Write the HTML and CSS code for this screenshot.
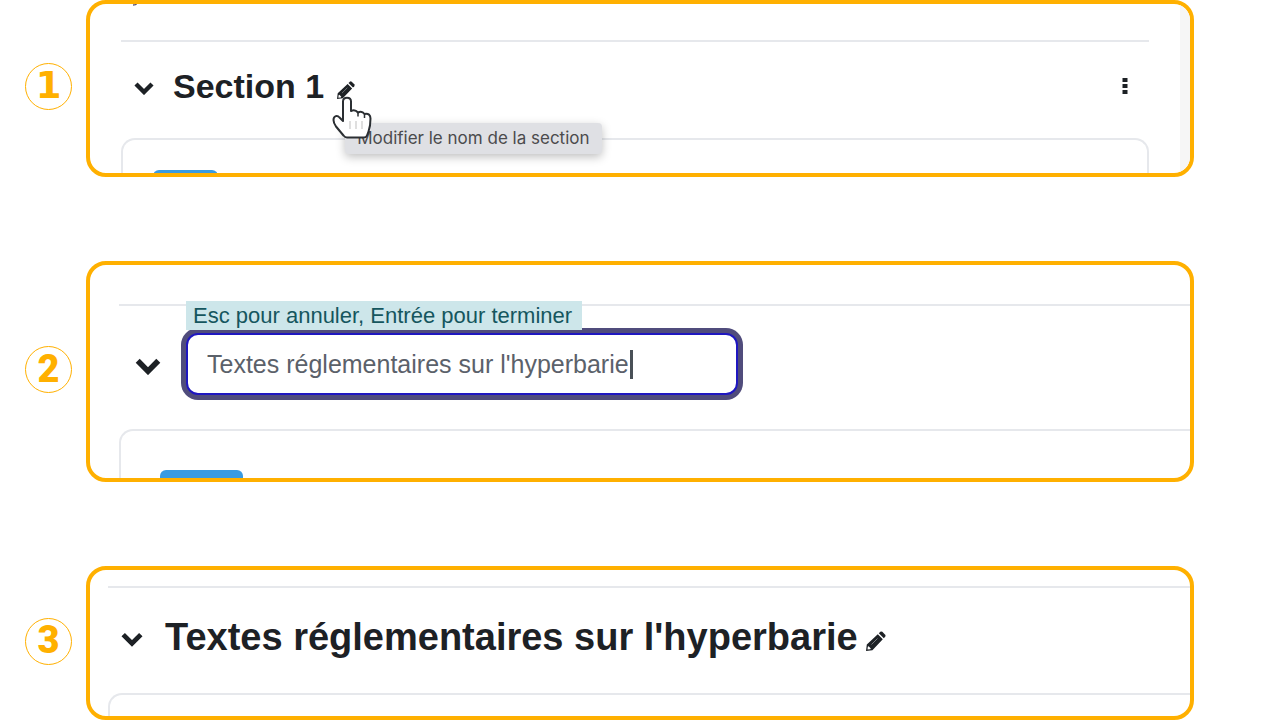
FILE: index.html
```
<!DOCTYPE html>
<html lang="fr">

<head>
  <meta charset="UTF-8" />
  <meta name="viewport" content="width=device-width, initial-scale=1.0" />
  <title>Modifier le nom de la section</title>
  <link rel="stylesheet" href="styles.css">
</head>

<body>
  <!-- shared icons -->
  <svg class="sprite" aria-hidden="true">
    <symbol id="chevron" viewBox="0 0 20 14">
      <path d="M2 3l8 8 8-8" fill="none" stroke="#1d2125" stroke-width="4.4" />
    </symbol>
    <symbol id="pencil" viewBox="0 0 20 20">
      <path fill="#1d2125" fill-rule="evenodd" d="M0 20l.8-6.400L11.800 3.200l5 5L6.400 19.200zM1.800 15.800l-.3 2.700 2.700-.3.6-.8-2.200-2.200z" />
      <path fill="#1d2125" d="M12.800 2.200L14.300.8q1-.8 2 0l2.900 2.900q.8 1 0 2l-1.400 1.500z" />
      <path d="M5.500 13.500l6-6" stroke="#8b8f93" stroke-width=".8" />
    </symbol>
  </svg>

  <main class="steps">
    <section class="step">
      <div class="badge badge-one">1</div>
      <div class="panel panel-hover">
        <svg class="cut-text" viewBox="0 0 6 3" aria-hidden="true"><path d="M1 1q3 0 3.500-1" fill="none" stroke="#5c5570" stroke-width="1.500" /></svg>
        <div class="topic">
          <div class="topic-header">
            <button class="icon-btn" aria-label="Replier"><svg class="chevron"><use href="#chevron" /></svg></button>
            <h2>Section 1</h2>
            <button class="icon-btn edit" aria-label="Modifier le nom de la section" aria-describedby="tip">
              <svg class="pencil"><use href="#pencil" /></svg>
              <span class="tooltip" id="tip" role="tooltip">Modifier le nom de la section</span>
              <svg class="hand" viewBox="0 0 40 43" aria-hidden="true">
                <path d="M11 25V5.500C11 0.500 19 0.500 19 5.500V15q4-2 7 1.500 4-2 6.500 1.500 6-1 6 4.500c0 6-.5 9-2 13l-1.500 4q-.7 2-3 2H15q-2 0-3.500-2L4 30.500Q1.500 27 1.500 24c0-4.500 4-5 6-2.500z" fill="#fff" stroke="#2b2f33" stroke-width="2" stroke-linejoin="round" />
                <path d="M26 16.500v4M32.500 18v4" stroke="#2b2f33" stroke-width="1.500" />
                <path d="M18 25v8M24 25v8M30 25v8" stroke="#d5d5d5" stroke-width="1.500" />
              </svg>
            </button>
            <button class="icon-btn menu" aria-label="Menu">
              <svg class="dots" viewBox="0 0 6 18"><path d="M.5 1h5v4h-5zM.5 7h5v4h-5zM.5 13h5v4h-5z" fill="#1d2125" /></svg>
            </button>
          </div>
          <div class="card"><div class="activity"></div></div>
        </div>
        <div class="gutter"></div>
      </div>
    </section>

    <section class="step">
      <div class="badge">2</div>
      <div class="panel panel-edit">
        <div class="topic">
          <div class="topic-header">
            <button class="icon-btn" aria-label="Replier"><svg class="chevron"><use href="#chevron" /></svg></button>
            <div class="field">
              <label class="hint" for="name">Esc pour annuler, Entrée pour terminer</label>
              <input id="name" type="text" value="Textes réglementaires sur l'hyperbarie">
              <span class="caret"></span>
            </div>
          </div>
          <div class="card"><div class="activity"></div></div>
        </div>
      </div>
    </section>

    <section class="step">
      <div class="badge">3</div>
      <div class="panel panel-done">
        <div class="topic">
          <div class="topic-header">
            <button class="icon-btn" aria-label="Replier"><svg class="chevron"><use href="#chevron" /></svg></button>
            <h2>Textes réglementaires sur l'hyperbarie</h2>
            <button class="icon-btn edit" aria-label="Modifier le nom de la section"><svg class="pencil"><use href="#pencil" /></svg></button>
          </div>
          <div class="card"></div>
        </div>
      </div>
    </section>
  </main>
</body>

</html>
```
FILE: styles.css
```
* {
  box-sizing: border-box;
}

body {
  margin: 0;
  background: #fff;
  color: #1d2125;
  font-family: "Liberation Sans", Arial, sans-serif;
}

.sprite {
  position: absolute;
  width: 0;
  height: 0;
}

.steps {
  display: flex;
  flex-direction: column;
  gap: 84px;
  padding: 0 86px 0 25px;
}

.step {
  display: flex;
  align-items: center;
  gap: 14px;
}

.badge {
  display: flex;
  flex: none;
  align-items: center;
  justify-content: center;
  width: 47px;
  height: 47px;
  margin-bottom: 4px;
  padding-bottom: 2px;
  border: 1px solid #ffb000;
  border-radius: 50%;
  color: #ffb000;
  font: 900 38px Roboto, sans-serif;
}

.badge-one {
  font: bold 37px "DejaVu Sans", sans-serif;
}

.panel {
  position: relative;
  display: flex;
  flex: 1;
  min-width: 0;
  border: 4px solid #ffb000;
  border-radius: 20px;
  overflow: hidden;
}

.topic {
  flex: 1;
  min-width: 0;
}

.topic-header {
  display: flex;
  align-items: center;
  border-top: 2px solid #e6e8ec;
}

h2 {
  margin: 0;
  line-height: 40px;
  white-space: nowrap;
}

.icon-btn {
  position: relative;
  flex: none;
  padding: 0;
  border: 0;
  background: none;
  cursor: pointer;
}

.icon-btn svg {
  display: block;
}

.chevron {
  margin-top: 3px;
}

.card {
  border: 2px solid #e6e8ec;
  border-bottom: 0;
  border-radius: 14px 14px 0 0;
  overflow: hidden;
}

.activity {
  height: 20px;
  border-radius: 6px 6px 0 0;
  background: #399be2;
}

/* step 1 */
.panel-hover .topic {
  margin: 36px 31px 0 31px;
}

.panel-hover .topic-header {
  padding: 24px 21px 32px 13px;
}

.panel-hover .chevron {
  width: 20px;
  height: 14px;
}

.panel-hover h2 {
  margin-left: 19px;
  font-size: 34px;
}

.panel-hover .edit {
  margin: 8px 0 0 13px;
}

.panel-hover .pencil {
  width: 18px;
  height: 18px;
}

.panel-hover .card {
  height: 35px;
  padding: 30px 30px 0;
}

.panel-hover .activity {
  width: 65px;
}

.menu {
  margin-left: auto;
}

.dots {
  width: 6px;
  height: 18px;
}

.gutter {
  width: 10px;
  background: #f6f6f6;
}

.cut-text {
  position: absolute;
  top: 0;
  left: 42px;
  width: 6px;
  height: 3px;
}

.tooltip {
  position: absolute;
  top: 42px;
  left: 8px;
  padding: 0 12px;
  border-radius: 4px;
  background: #dfe0e4;
  box-shadow: 0 3px 10px rgba(0, 0, 0, 0.25);
  color: #4b4b4d;
  font: 17px/31px Inter, sans-serif;
  white-space: nowrap;
}

.hand {
  position: absolute;
  top: 15px;
  left: -5px;
  width: 40px;
  height: 43px;
}

/* step 2 */
.panel-edit .topic {
  margin: 39px 0 0 29px;
}

.panel-edit .topic-header {
  padding: 27px 0 34px 16px;
}

.panel-edit .chevron {
  width: 26px;
  height: 18px;
}

.field {
  position: relative;
  width: 552px;
  margin-left: 25px;
}

.field input {
  display: block;
  width: 100%;
  height: 62px;
  padding: 0 19px;
  border: 2px solid #1f17c0;
  border-radius: 12px;
  outline: 0;
  box-shadow: 0 0 0 5px #504c7c;
  color: #5b616a;
  font: 25px "Liberation Sans", Arial, sans-serif;
}

.hint {
  position: absolute;
  z-index: 1;
  bottom: 65px;
  left: 0;
  padding: 0 10px 0 7px;
  background: #cde6ea;
  color: #15565e;
  font-size: 22px;
  line-height: 29px;
  white-space: nowrap;
}

.caret {
  position: absolute;
  top: 17px;
  left: 444px;
  width: 3px;
  height: 29px;
  background: #495057;
}

.panel-edit .card {
  height: 49px;
  padding: 39px 39px 0;
  border-right: 0;
  border-top-right-radius: 0;
}

.panel-edit .activity {
  width: 83px;
}

/* step 3 */
.panel-done .topic {
  margin: 16px 0 0 18px;
}

.panel-done .topic-header {
  padding: 29px 0 36px 13px;
}

.panel-done .chevron {
  width: 22px;
  height: 16px;
}

.panel-done h2 {
  margin-left: 22px;
  font-size: 38px;
}

.panel-done .edit {
  margin: 8px 0 0 8px;
}

.panel-done .pencil {
  width: 20px;
  height: 20px;
}

.panel-done .card {
  height: 23px;
  border-right: 0;
  border-top-right-radius: 0;
}
```
